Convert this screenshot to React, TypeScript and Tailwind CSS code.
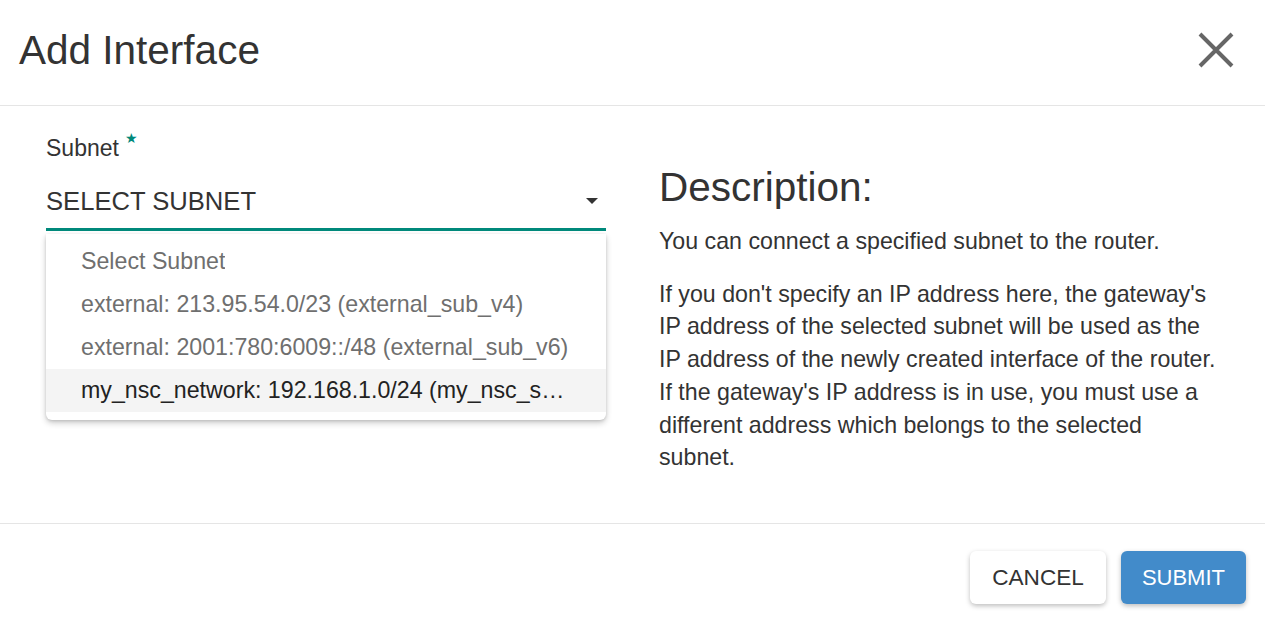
const options = [
  'Select Subnet',
  'external: 213.95.54.0/23 (external_sub_v4)',
  'external: 2001:780:6009::/48 (external_sub_v6)',
  'my_nsc_network: 192.168.1.0/24 (my_nsc_subnet)',
];

export default function App() {
  return (
    <div className="w-[1265px] h-[623px] bg-white text-[#333] font-['Liberation_Sans',Arial,sans-serif] flex flex-col">
      {/* Header */}
      <div className="h-[106px] border-b border-[#e5e5e5] flex items-center justify-between pl-[19px] pr-[31px] shrink-0">
        <h1 className="text-[40.5px] leading-none pb-[4px]">Add Interface</h1>
        <button className="w-[36px] h-[36px] flex items-center justify-center mb-[6px]">
          <svg width="36" height="36" viewBox="0 0 36 36">
            <path d="M2 2 L34 34 M34 2 L2 34" stroke="#666" strokeWidth="4" />
          </svg>
        </button>
      </div>

      {/* Body */}
      <div className="flex-1 flex pl-[46px] pr-[40px]">
        <div className="w-[560px] pt-[31px]">
          <div className="flex items-start text-[23px] leading-none">
            <span>Subnet</span>
            <span className="text-[#00897b] text-[14px] ml-[6px] -mt-[6px]">★</span>
          </div>
          <div className="relative mt-[25px]">
            <div className="h-[46px] flex items-start justify-between border-b-[3px] border-[#00897b]">
              <span className="text-[25.6px] leading-none pt-[4px]">SELECT SUBNET</span>
              <svg width="12" height="6" viewBox="0 0 12 6" className="mt-[13px] mr-[8px]">
                <path d="M0 0 L12 0 L6 6 Z" fill="#333" />
              </svg>
            </div>
            <ul className="absolute left-0 right-0 top-[49px] bg-white rounded-b-[6px] shadow-[0_3px_6px_rgba(0,0,0,0.2),0_1px_3px_rgba(0,0,0,0.12)] pt-[6px] pb-[8px]">
              {options.map((o, i) => (
                <li
                  key={o}
                  className={
                    i === 3
                      ? 'h-[43px] flex items-center pl-[35px] pr-[37px] text-[23.2px] text-[#222] bg-[#f4f4f4] whitespace-nowrap overflow-hidden'
                      : 'h-[43px] flex items-center pl-[35px] pr-[37px] text-[23.2px] text-[#6f6f6f] whitespace-nowrap overflow-hidden'
                  }
                >
                  <span className="truncate">{o}</span>
                </li>
              ))}
            </ul>
          </div>
        </div>

        <div className="ml-[53px] w-[560px] pt-[61px]">
          <h2 className="text-[40.5px] leading-none">Description:</h2>
          <p className="mt-[17px] text-[23.2px] leading-[33px]">You can connect a specified subnet to the router.</p>
          <p className="mt-[20px] text-[23.2px] leading-[32.8px]">
            If you don't specify an IP address here, the gateway's IP address of the selected subnet will be used as the IP address of the newly created interface of the router. If the gateway's IP address is in use, you must use a different address which belongs to the selected subnet.
          </p>
        </div>
      </div>

      {/* Footer */}
      <div className="h-[100px] border-t border-[#e5e5e5] flex items-start justify-end gap-[15px] pt-[27px] pr-[19px] shrink-0">
        <button className="h-[53px] px-[22px] rounded-[6px] bg-white text-[22.6px] text-[#333] shadow-[0_2px_5px_rgba(0,0,0,0.26)]">
          CANCEL
        </button>
        <button className="h-[53px] px-[21px] rounded-[6px] bg-[#428bca] text-[22px] text-white shadow-[0_2px_5px_rgba(0,0,0,0.26)]">
          SUBMIT
        </button>
      </div>
    </div>
  );
}
